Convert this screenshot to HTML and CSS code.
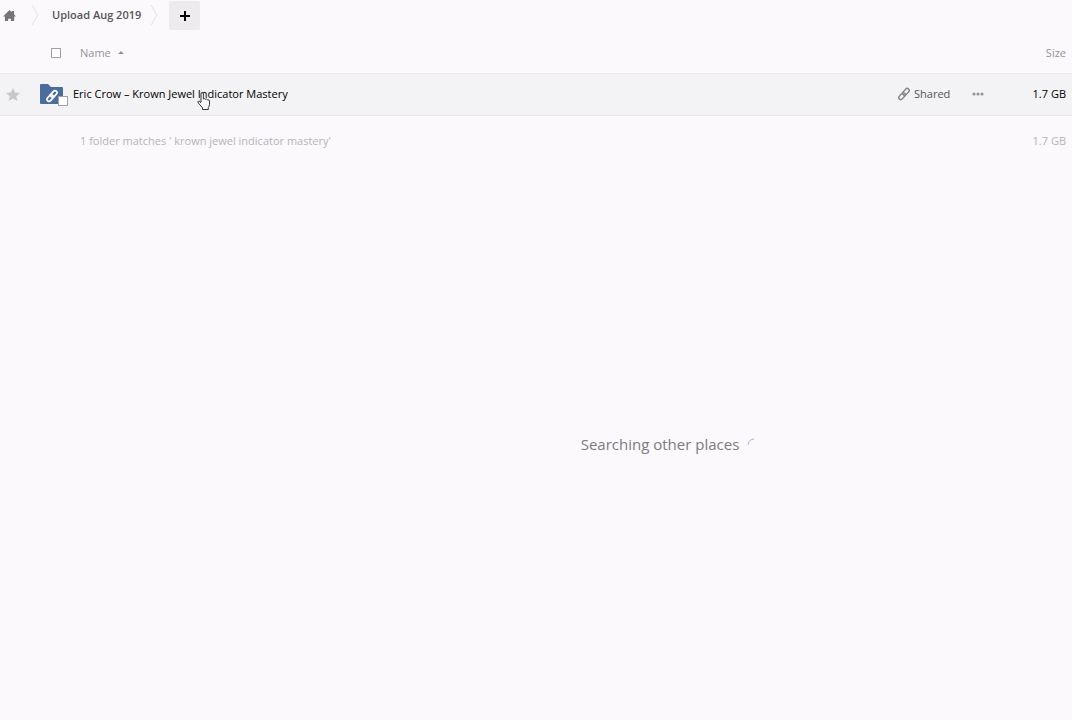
FILE: index.html
```html
<!DOCTYPE html>
<html lang="en">
<head>
<meta charset="utf-8">
<title>Upload Aug 2019 - Files</title>
<link rel="stylesheet" href="styles.css">
</head>
<body>
<nav class="crumbs" aria-label="Breadcrumb">
  <a class="home" href="#" aria-label="Home"><svg width="13" height="11" viewBox="0 0 14 12"><path fill="#77757a" d="M7 0l2.600 2.300V1H12v3.500L14 7h-1.900v5H8.500V9.500h-3V12H2V7H0z"/></svg></a>
  <svg class="sep" width="8" height="22" viewBox="0 0 8 22"><path d="M1 1l6 10-6 10"/></svg>
  <a class="crumb" href="#">Upload Aug 2019</a>
  <svg class="sep" width="8" height="22" viewBox="0 0 8 22"><path d="M1 1l6 10-6 10"/></svg>
  <button class="add" aria-label="New"><svg width="10" height="10" viewBox="0 0 10 10"><path d="M5 0v10M0 5h10" stroke="#000" stroke-width="2"/></svg></button>
</nav>
<main>
  <table class="files">
    <thead>
      <tr>
        <th class="col-star"></th>
        <th class="col-icon"><input class="box" type="checkbox" aria-label="Select all"></th>
        <th class="col-name"><button class="sort">Name<svg width="6" height="3" viewBox="0 0 6 3"><path fill="#969499" d="M0 3l3-3 3 3z"/></svg></button></th>
        <th class="col-share"></th>
        <th class="col-more"></th>
        <th class="col-size"><button class="sort">Size</button></th>
      </tr>
    </thead>
    <tbody>
      <tr>
        <td class="col-star"><button class="plain" aria-label="Favorite"><svg width="14" height="13" viewBox="0 0 14 13"><path fill="#c8c7c9" d="M7 0l2 4.500 5 .5-3.800 3.200L11.400 13 7 10.400 2.600 13l1.200-4.800L0 5l5-.5z"/></svg></button></td>
        <td class="col-icon"><span class="thumb">
          <svg width="24" height="21" viewBox="0 0 24 21"><path fill="#4a6d9c" d="M0 1q0-1 1-1h7l3 3h11q1 0 1 1v16H1q-1 0-1-1z"/><g transform="rotate(-48 12 12)" fill="none" stroke="#fff" stroke-width="1.700"><rect x="5.500" y="10" width="7.500" height="4" rx="2"/><rect x="11" y="10" width="7.500" height="4" rx="2"/></g></svg>
          <input class="box badge" type="checkbox" aria-label="Select Eric Crow – Krown Jewel Indicator Mastery"></span></td>
        <td class="col-name"><a class="file" href="#">Eric Crow – Krown Jewel Indicator Mastery<svg class="pointer" width="14" height="18" viewBox="0 0 14 18"><path fill="#f8f8fa" stroke="#333" stroke-linejoin="round" d="M4 10V2q0-1.300 1.200-1.300T6.400 2v5q1-.8 2 .3 1.200-.7 2 .5 2-.3 2.100 1.400v3q0 2-1.200 3.300v2H5.500v-1.700L1.300 11Q.5 9.500 1.500 9T4 11"/></svg></a></td>
        <td class="col-share"><a class="shared" href="#"><svg width="12" height="12" viewBox="0 0 12 12"><g transform="rotate(-48 6 6)" fill="none" stroke="#858387" stroke-width="1.400"><rect x="-.8" y="4" width="7.800" height="4" rx="2"/><rect x="5" y="4" width="7.800" height="4" rx="2"/></g></svg>Shared</a></td>
        <td class="col-more"><button class="plain" aria-label="Actions"><svg width="12" height="4" viewBox="0 0 12 4" fill="#949296"><circle cx="2" cy="2" r="1.600"/><circle cx="6" cy="2" r="1.600"/><circle cx="10" cy="2" r="1.600"/></svg></button></td>
        <td class="col-size">1.7 GB</td>
      </tr>
    </tbody>
    <tfoot>
      <tr>
        <td></td>
        <td></td>
        <td class="col-name" colspan="3">1 folder matches ' krown jewel indicator mastery'</td>
        <td class="col-size">1.7 GB</td>
      </tr>
    </tfoot>
  </table>
  <p class="status" role="status">Searching other places<svg width="12" height="12" viewBox="0 0 12 12"><path fill="none" stroke="#b5b3b8" d="M1 7a6 6 0 0 1 6-6"/></svg></p>
</main>
</body>
</html>
```
FILE: styles.css
```css
* { box-sizing: border-box; }
body {
  margin: 0;
  min-height: 100vh;
  background: #fbf9fc;
  color: #000;
  font: 11px/18px "Open Sans", sans-serif;
  overflow-x: hidden;
}
svg { display: block; overflow: visible; flex: none; }
a { color: inherit; text-decoration: none; }
button {
  padding: 0;
  border: 0;
  background: none;
  color: inherit;
  font: inherit;
  cursor: pointer;
}
.crumbs { display: flex; align-items: center; height: 31px; padding: 0 0 1px 3px; }
.home { margin-right: 15px; }
.sep { fill: none; stroke: #e4e2e6; }
.crumb { margin: 0 9px 0 13px; color: #565459; font-weight: 600; }
.add {
  display: grid;
  place-items: center;
  align-self: flex-start;
  width: 31px;
  height: 29px;
  margin: 1px 0 0 11px;
  border-radius: 2px;
  background: #edebee;
}
.files { width: 100%; border-collapse: collapse; table-layout: fixed; }
.files th, .files td { padding: 0; text-align: left; vertical-align: middle; font-weight: 400; }
.files thead { color: #969499; }
.files thead tr { height: 42px; }
.files tbody tr { height: 42px; border: solid #ebe9ec; border-width: 1px 0; background: #f3f2f4; }
.files tfoot { color: #b6b4b8; }
.files tfoot tr { height: 52px; }
.files .col-star { width: 40px; padding-left: 6px; }
.files .col-icon { width: 33px; }
.files thead .col-icon { padding-left: 11px; }
.files thead th { padding-top: 2px; }
.files thead .col-name, .files tfoot .col-name { padding-left: 7px; }
.files .col-share { width: 74px; }
.files .col-more { width: 50px; }
.files .col-size { width: 50px; padding-right: 6px; text-align: right; }
.sort { display: inline-flex; align-items: center; gap: 7px; }
.plain { display: block; }
.box {
  display: block;
  appearance: none;
  width: 10px;
  height: 10px;
  margin: 0;
  border: 1px solid #a3a1a6;
  background: #fff;
}
.thumb { position: relative; display: block; width: 24px; }
.badge { position: absolute; right: -4px; bottom: -1px; }
.file { position: relative; }
.pointer { position: absolute; left: 124px; top: 6px; }
.shared { display: flex; align-items: center; gap: 4px; color: #565459; }
.status {
  display: flex;
  justify-content: center;
  align-items: center;
  gap: 8px;
  margin: 265px 0 0;
  padding-left: 25%;
  color: #7d7b80;
  font-size: 15px;
  line-height: 24px;
}
```
